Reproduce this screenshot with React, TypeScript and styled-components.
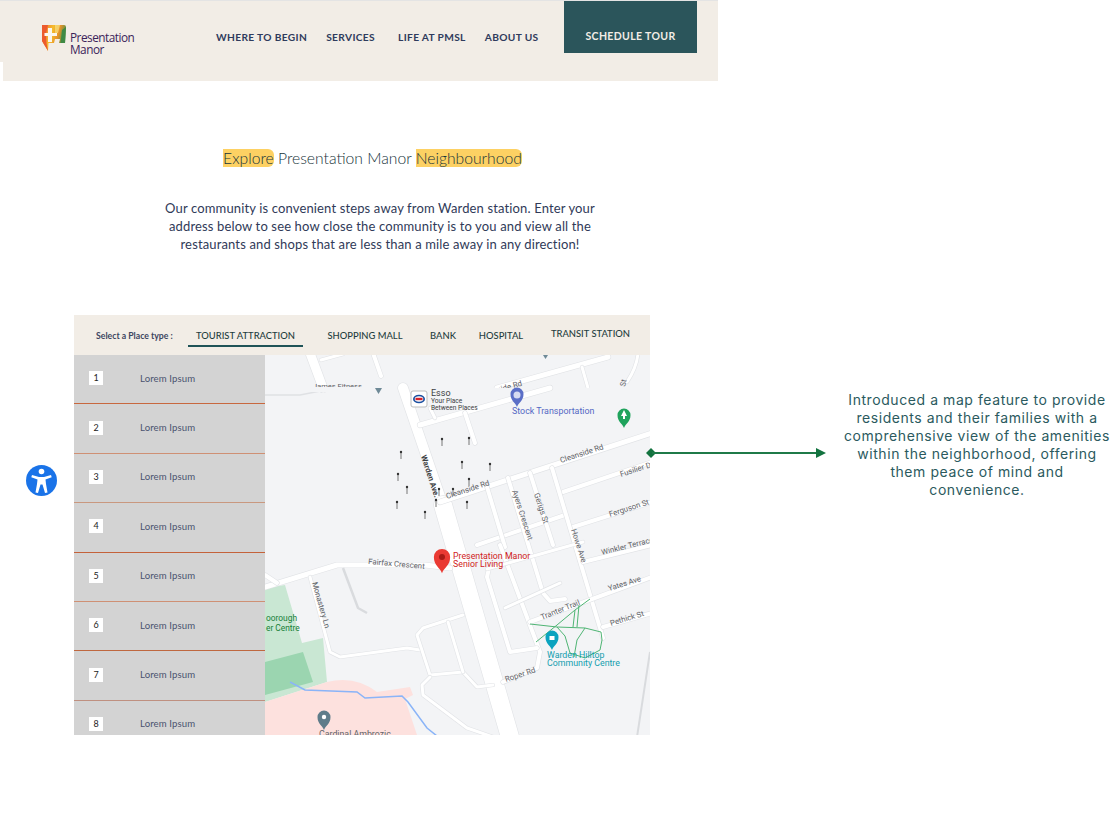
import React from "react";
import styled, { createGlobalStyle } from "styled-components";

const GlobalStyle = createGlobalStyle`
  html, body {
    margin: 0;
    padding: 0;
    background: #fff;
  }
  * { box-sizing: border-box; }
`;

const Page = styled.div`
  width: 1111px;
  height: 836px;
  overflow: hidden;
  font-family: "Lato", "Liberation Sans", sans-serif;
`;

const Header = styled.header`
  position: relative;
  width: 718px;
  height: 81px;
  display: flex;
  align-items: flex-start;
  padding-left: 41px;
  background: #f2ede6;
  border-top: 1px solid #e4e4e4;
  &::after {
    content: "";
    position: absolute;
    left: 0;
    bottom: 0;
    width: 3px;
    height: 19px;
    background: #fff;
  }
`;

const Logo = styled.div`
  display: flex;
  align-items: flex-start;
  width: 175px;
  padding-top: 23px;
`;

const LogoName = styled.div`
  margin: 8px 0 0 2px;
  font-family: "Open Sans", sans-serif;
  font-size: 11.8px;
  line-height: 11.5px;
  letter-spacing: -0.5px;
  color: #3b2359;
`;

const Nav = styled.nav`
  display: flex;
  padding-top: 30px;
  width: 348px;
`;

const NavLink = styled.a<{ $gap: number }>`
  margin-right: ${(p) => p.$gap}px;
  font-size: 10.2px;
  line-height: 13px;
  font-weight: 700;
  letter-spacing: 0.35px;
  color: #2f3b5c;
  white-space: nowrap;
`;

const TourButton = styled.a`
  width: 133px;
  height: 52px;
  padding-top: 29px;
  text-align: center;
  font-size: 10.5px;
  line-height: 13px;
  font-weight: 700;
  letter-spacing: 0.35px;
  color: #f2ede6;
  background: #2b555b;
`;

const Intro = styled.section`
  width: 718px;
  padding-top: 68px;
  display: flex;
  flex-direction: column;
  align-items: center;
`;

const Title = styled.h1`
  margin: 0 0 0 27px;
  font-size: 15.7px;
  line-height: 19px;
  font-weight: 300;
  color: #17343a;
  white-space: nowrap;
`;

const Mark = styled.span`
  background: #fdd163;
  border-radius: 0 6px 6px 0;
`;

const Lede = styled.p`
  margin: 31px 0 0 42px;
  font-size: 13px;
  line-height: 18px;
  letter-spacing: 0.14px;
  text-align: center;
  color: #303a58;
  white-space: nowrap;
`;

const Feature = styled.section`
  display: flex;
  align-items: flex-start;
  padding: 62px 0 0 26px;
`;

const AccessBadge = styled.div`
  width: 31px;
  height: 31px;
  margin: 150px 17px 0 0;
`;

const Panel = styled.div`
  width: 576px;
  flex: none;
`;

const Tabs = styled.div`
  height: 40px;
  display: flex;
  align-items: flex-start;
  background: #f2ede6;
`;

const TabLabel = styled.span`
  width: 114px;
  padding: 16px 0 0 22px;
  font-size: 8.7px;
  line-height: 10px;
  font-weight: 700;
  color: #3c4560;
  white-space: nowrap;
`;

const Tab = styled.a<{ $active?: boolean; $gap: number; $width: number; $raised?: boolean }>`
  width: ${(p) => p.$width}px;
  margin-right: ${(p) => p.$gap}px;
  height: 32px;
  padding-top: ${(p) => (p.$raised ? 13 : 15)}px;
  font-size: 9.4px;
  line-height: 12px;
  font-weight: 500;
  text-align: center;
  color: #1f3d40;
  white-space: nowrap;
  border-bottom: 2px solid ${(p) => (p.$active ? "#1f5357" : "transparent")};
`;

const PanelBody = styled.div`
  display: flex;
  height: 380px;
  overflow: hidden;
`;

const Sidebar = styled.div`
  width: 191px;
  flex: none;
  background: #d3d3d3;
`;

const Row = styled.div<{ $line: string }>`
  height: 49.4px;
  display: flex;
  align-items: center;
  padding: 0 0 2px 15px;
  border-bottom: 1px solid ${(p) => p.$line};
`;

const RowNumber = styled.span`
  width: 14px;
  height: 14px;
  margin-right: 37px;
  background: #fff;
  text-align: center;
  font-size: 9px;
  line-height: 14px;
  color: #222;
`;

const RowName = styled.span`
  font-size: 9.6px;
  letter-spacing: 0.1px;
  color: #4b5470;
`;

const MapArea = styled.svg`
  display: block;
  width: 385px;
  height: 380px;
  background: #f3f4f6;
  font-family: "Roboto", sans-serif;
`;

const Connector = styled.svg`
  display: block;
  flex: none;
  width: 183px;
  height: 14px;
  margin: 131px 0 0 -6px;
`;

const Note = styled.p`
  width: 268px;
  margin: 76px 0 0 16px;
  flex: none;
  font-family: "Inter", sans-serif;
  font-size: 14px;
  line-height: 18px;
  letter-spacing: 0.57px;
  text-align: center;
  white-space: nowrap;
  color: #2b5a5e;
`;

const LogoMark = () => (
  <svg width="27" height="28" viewBox="0 0 27 28">
    <defs>
      <linearGradient id="shield" x1="0" y1="0" x2="1" y2="0.3">
        <stop offset="0" stopColor="#ee6a36" />
        <stop offset="0.45" stopColor="#f5bd2e" />
        <stop offset="0.72" stopColor="#e8932b" />
        <stop offset="1" stopColor="#4a9046" />
      </linearGradient>
    </defs>
    <path
      d="M1 1 H23 Q25 1 25 3 L24 19 H18 L19 15 H14 L13 19 H9 L7.500 19 L7 27 L1 17 Z"
      fill="url(#shield)"
    />
    <path d="M1 1 H7 L5 10 L5.500 19 L7 27 L1 17 Z" fill="#ec5b2e" />
    <path d="M21 6 L25 3 L24 19 H19.500 Z" fill="#3f8a45" />
    <path d="M14 1 H19 L17 9 H14 Z" fill="#f7df7e" opacity="0.75" />
    <path
      d="M7 4 H11 V9 H16 V12 H11 V18 H7 V12 H3.500 V9 H7 Z"
      fill="#fbf7ef"
    />
  </svg>
);

const Road = ({
  d,
  w = 5,
}: {
  d: string;
  w?: number;
}) => (
  <g fill="none" strokeLinejoin="round" strokeLinecap="round">
    <path d={d} stroke="#e1e3e6" strokeWidth={w + 1.2} />
    <path d={d} stroke="#fff" strokeWidth={w} />
  </g>
);

const Label = ({
  x,
  y,
  r = 0,
  size = 7.8,
  color = "#5f6368",
  bold,
  children,
}: {
  x: number;
  y: number;
  r?: number;
  size?: number;
  color?: string;
  bold?: boolean;
  children: React.ReactNode;
}) => (
  <text
    x={x}
    y={y}
    fontSize={size}
    fontWeight={bold ? 700 : 400}
    fill={color}
    transform={r ? `rotate(${r} ${x} ${y})` : undefined}
  >
    {children}
  </text>
);

const Pin = ({ x, y, color, size = 1 }: { x: number; y: number; color: string; size?: number }) => (
  <g transform={`translate(${x} ${y}) scale(${size})`}>
    <path
      d="M0 13 C-1.500 8.500 -6.500 7 -6.500 0 A6.500 6.500 0 0 1 6.500 0 C6.500 7 1.500 8.500 0 13 Z"
      fill={color}
    />
  </g>
);

const TinyPin = ({ x, y }: { x: number; y: number }) => (
  <g>
    <path d={`M${x} ${y} v7`} stroke="#777" strokeWidth="1" />
    <circle cx={x} cy={y} r="1.200" fill="#333" />
  </g>
);

const tinyPins = [
  [177, 84],
  [204, 83],
  [136, 97],
  [197, 107],
  [225, 109],
  [133, 119],
  [142, 132],
  [204, 124],
  [188, 134],
  [174, 134],
  [171, 145],
  [132, 147],
  [202, 147],
  [160, 157],
];

const NeighbourhoodMap = () => (
  <MapArea viewBox="0 0 385 380">
    {/* parks and grounds */}
    <path d="M0 233 L20 230 L37 288 L58 283 L62 327 L0 347 Z" fill="#c9e7d3" />
    <path d="M0 307 L38 297 L48 327 L0 340 Z" fill="#9bd5b0" />
    <path
      d="M0 347 L62 327 Q90 320 112 337 L145 332 L148 340 L140 344 L152 380 L0 380 Z"
      fill="#fde1de"
    />

    {/* upper slice of the map, cut off by the lower one */}
    <Road d="M45 -2 L58 33" w={9} />
    <Road d="M108 -2 L116 21" w={4} />
    <Road d="M56 5 L78 -1" w={3} />
    <Road d="M343 2 L232 33" w={5} />
    <Road d="M373 -2 Q372 12 362 27" w={3} />
    <Road d="M317 12 L323 33" w={3} />
    <path d="M0 40 H35 L76 32" fill="none" stroke="#dfe1e4" strokeWidth="1.500" />
    <path d="M278 0 H283 L280.500 4 Z" fill="#6f8a97" />
    <Label x={214} y={43} r={-16}>Cleanside Rd</Label>
    <Label x={360} y={32} r={-76}>St</Label>
    <Label x={48} y={34} size={7.5}>James Fitness</Label>
    <rect x="45" y="32" width="66" height="5" fill="#f3f4f6" />
    <rect x="130" y="33" width="255" height="60" fill="#f3f4f6" />

    {/* lower slice */}
    <Road d="M138 33 L178 150" w={10} />
    <Road d="M178 150 L245 382" w={18} />
    <Road d="M155 70 L285 33" w={5} />
    <Road d="M200 58 L210 88" w={4} />
    <Road d="M165 53 L170 63" w={3} />
    <Road d="M175 147 L387 78" w={5} />
    <Road d="M298 137 L387 107" w={4} />
    <Road d="M308 172 L387 147" w={4} />
    <Road d="M212 190 L300 160" w={4} />
    <Road d="M222 132 L240 192" w={4} />
    <Road d="M243 123 L278 238 L285 246 L300 244" w={4} />
    <Road d="M265 118 L288 190" w={4} />
    <Road d="M287 113 L338 283" w={4} />
    <Road d="M0 232 L72 210 L160 210 L185 213" w={5} />
    <Road d="M0 220 L12 228" w={4} />
    <Road d="M45 222 L65 297 L75 302 L142 293 L155 295" w={3} />
    <path d="M78 213 L93 253 L102 258" fill="none" stroke="#d9dbde" strokeWidth="2.500" />
    <Road d="M198 260 L158 273 L152 280 L165 320 L198 317 L212 332 L228 330" w={3} />
    <Road d="M183 267 L198 317" w={3} />
    <Road d="M165 322 L157 330 L158 340 L202 373 L228 382" w={3} />
    <Road d="M235 190 L275 297 L272 313 L238 327" w={4} />
    <Road d="M224 213 L222 222 L245 297 L272 293" w={4} />
    <Road d="M265 267 L387 222" w={4} />
    <Road d="M338 272 L387 258" w={4} />
    <Road d="M240 253 L295 228" w={3} />
    <Road d="M318 207 L387 190" w={4} />
    <Road d="M222 214 L318 187" w={3} />
    <path d="M385 297 L372 382" fill="none" stroke="#d9dbde" strokeWidth="2" />

    {/* stream and trails */}
    <path
      d="M25 327 L40 335 L92 337 L100 343 L137 341 L143 347 L162 373 L172 381"
      fill="none"
      stroke="#8ab4f8"
      strokeWidth="1.500"
    />
    <g fill="none" stroke="#4fb574" strokeWidth="1">
      <path d="M265 269 L292 272 L320 273 L336 277 L337 285 L335 295" />
      <path d="M271 287 L292 270 L310 255 L325 244" />
      <path d="M310 255 L308 272 M314 250 L312 272" />
      <path d="M292 272 L300 281 L305 298 L320 303 L335 295" />
      <path d="M320 273 L312 285 L309 302" />
    </g>

    {/* places */}
    <g transform="translate(146 36)">
      <rect x="0" y="0" width="16" height="16" rx="2" fill="#fff" stroke="#bdbdbd" />
      <ellipse cx="8" cy="8" rx="6" ry="4.300" fill="#1a4fa0" />
      <ellipse cx="8" cy="8" rx="4.300" ry="2.800" fill="#fff" />
      <rect x="4.500" y="6.800" width="7" height="2.400" fill="#d8232a" />
    </g>
    <Label x={166} y={41} size={9} color="#3c4043">Esso</Label>
    <Label x={166} y={48} size={6.6} color="#3c4043">Your Place</Label>
    <Label x={166} y={55} size={6.6} color="#3c4043">Between Places</Label>

    <Pin x={252} y={39} color="#5b6fc7" />
    <circle cx={252} cy={40} r="3.500" fill="#fff" opacity="0.75" />
    <Label x={247} y={59} size={8.9} color="#5468c4">Stock Transportation</Label>
    <Pin x={359} y={60} color="#1fa35c" />
    <path d="M359 55 L362 61 H360 V64 H358 V61 H356 Z" fill="#fff" />
    <path d="M110 33 H117 L113.500 39 Z" fill="#6f8a97" />

    {tinyPins.map(([x, y]) => (
      <TinyPin key={`${x}-${y}`} x={x} y={y} />
    ))}

    <Label x={156} y={101} r={72} size={7.8} color="#3c4043" bold>Warden Ave.</Label>
    <Label x={182} y={144} r={-18}>Cleanside Rd</Label>
    <Label x={296} y={108} r={-18}>Cleanside Rd</Label>
    <Label x={356} y={122} r={-18}>Fusilier Dr</Label>
    <Label x={345} y={162} r={-18}>Ferguson St</Label>
    <Label x={247} y={136} r={72}>Ayers Crescent</Label>
    <Label x={269} y={139} r={72}>Gerigs St</Label>
    <Label x={306} y={175} r={72}>Howe Ave</Label>
    <Label x={103} y={209} r={5}>Fairfax Crescent</Label>
    <Label x={337} y={200} r={-14}>Winkler Terrace</Label>
    <Label x={344} y={236} r={-17}>Yates Ave</Label>
    <Label x={346} y={271} r={-17}>Pethick St</Label>
    <Label x={277} y={265} r={-22}>Tranter Trail</Label>
    <Label x={241} y={327} r={-18}>Roper Rd</Label>
    <Label x={47} y={228} r={74}>Monastery Ln</Label>

    <Pin x={177} y={202} color="#ea3a33" size={1.25} />
    <circle cx={177} cy={202} r="3" fill="#a81b16" />
    <Label x={188} y={204} size={8.8} color="#d01c1c">Presentation Manor</Label>
    <Label x={188} y={212} size={8.8} color="#d01c1c">Senior Living</Label>

    <Pin x={287} y={282} color="#0aa3bf" />
    <rect x="284.500" y="281" width="5" height="4" fill="#fff" />
    <Label x={282} y={303} size={8.8} color="#129eaf">Warden Hilltop</Label>
    <Label x={282} y={311} size={8.8} color="#129eaf">Community Centre</Label>

    <Label x={1} y={266} size={8.4} color="#188038">oorough</Label>
    <Label x={1} y={276} size={8.4} color="#188038">er Centre</Label>

    <Pin x={59} y={362} color="#5f7c8a" />
    <circle cx={59} cy={362} r="2.200" fill="#fff" />
    <Label x={54} y={382} size={8.8} color="#5f6368">Cardinal Ambrozic</Label>
  </MapArea>
);

const navLinks = [
  { name: "WHERE TO BEGIN", gap: 19 },
  { name: "SERVICES", gap: 23 },
  { name: "LIFE AT PMSL", gap: 19 },
  { name: "ABOUT US", gap: 0 },
];

const rows = [
  { id: 1, line: "#c8683f" },
  { id: 2, line: "#cf9074" },
  { id: 3, line: "#c9987f" },
  { id: 4, line: "#c4623a" },
  { id: 5, line: "#cf9074" },
  { id: 6, line: "#bf6840" },
  { id: 7, line: "#bf9080" },
  { id: 8, line: "#d3d3d3" },
];

const tabs = [
  { name: "TOURIST ATTRACTION", active: true, width: 115, gap: 19 },
  { name: "SHOPPING MALL", width: 86, gap: 19 },
  { name: "BANK", width: 32, gap: 17 },
  { name: "HOSPITAL", width: 50, gap: 23 },
  { name: "TRANSIT STATION", width: 83, gap: 0, raised: true },
];

export default function App() {
  return (
    <Page>
      <GlobalStyle />
      <Header>
        <Logo>
          <LogoMark />
          <LogoName>
            Presentation
            <br />
            Manor
          </LogoName>
        </Logo>
        <Nav>
          {navLinks.map((l) => (
            <NavLink key={l.name} $gap={l.gap}>
              {l.name}
            </NavLink>
          ))}
        </Nav>
        <TourButton>SCHEDULE TOUR</TourButton>
      </Header>

      <Intro>
        <Title>
          <Mark>Explore</Mark> Presentation Manor <Mark>Neighbourhood</Mark>
        </Title>
        <Lede>
          Our community is convenient steps away from Warden station. Enter your
          <br />
          address below to see how close the community is to you and view all the
          <br />
          restaurants and shops that are less than a mile away in any direction!
        </Lede>
      </Intro>

      <Feature>
        <AccessBadge>
          <svg width="31" height="31" viewBox="0 0 31 31">
            <circle cx="15.500" cy="15.500" r="15.500" fill="#1a73e8" />
            <circle cx="15.500" cy="6.500" r="2.800" fill="#fff" />
            <path
              d="M6 10 L13 12 H18 L25 10 L25.700 12.300 L19.500 14.500 L20 19 L21.500 27.500 L19 28 L16.500 19.500 H14.500 L12 28 L9.500 27.500 L11 19 L11.500 14.500 L5.300 12.300 Z"
              fill="#fff"
            />
          </svg>
        </AccessBadge>
        <Panel>
          <Tabs>
            <TabLabel>Select a Place type :</TabLabel>
            {tabs.map((t) => (
              <Tab
                key={t.name}
                $active={t.active}
                $width={t.width}
                $gap={t.gap}
                $raised={t.raised}
              >
                {t.name}
              </Tab>
            ))}
          </Tabs>
          <PanelBody>
            <Sidebar>
              {rows.map((r) => (
                <Row key={r.id} $line={r.line}>
                  <RowNumber>{r.id}</RowNumber>
                  <RowName>Lorem Ipsum</RowName>
                </Row>
              ))}
            </Sidebar>
            <NeighbourhoodMap />
          </PanelBody>
        </Panel>
        <Connector viewBox="0 0 183 14">
          <path d="M7 2 L12 7 L7 12 L2 7 Z" fill="#13733f" />
          <path d="M8 7 H174" stroke="#1f7a48" strokeWidth="2" />
          <path d="M172 2 L182 7 L172 12 Z" fill="#13733f" />
        </Connector>
        <Note>
          Introduced a map feature to provide
          <br />
          residents and their families with a
          <br />
          comprehensive view of the amenities
          <br />
          within the neighborhood, offering
          <br />
          them peace of mind and
          <br />
          convenience.
        </Note>
      </Feature>
    </Page>
  );
}
